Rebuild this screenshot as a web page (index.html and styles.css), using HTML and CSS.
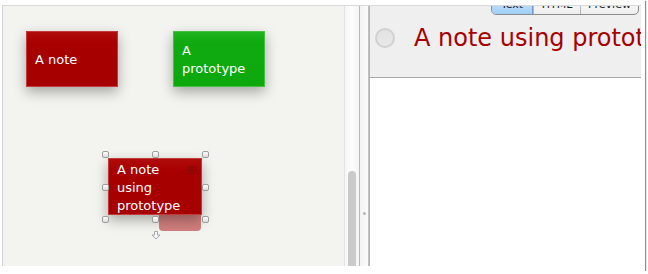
FILE: index.html
```html
<!DOCTYPE html>
<html>
<head>
<meta charset="utf-8">
<link rel="stylesheet" href="styles.css">
</head>
<body>
<div class="frame">
  <div class="window">
    <div class="canvas">
      <div class="note red n1"><div class="txt">A note</div></div>
      <div class="note green n2"><div class="txt">A prototype</div></div>
      <div class="attach"></div>
      <div class="note red n3">
        <div class="txt">A note using prototype</div>
        <svg class="plus" width="10" height="10" viewBox="0 0 10 10"><circle cx="5" cy="5" r="4" fill="none" stroke="#7c0a0a" stroke-width="1"/><path d="M5 2.5V7.5M2.5 5H7.5" stroke="#7c0a0a" stroke-width="1"/></svg>
      </div>
      <span class="handle h1"></span><span class="handle h2"></span><span class="handle h3"></span>
      <span class="handle h4"></span><span class="handle h5"></span>
      <span class="handle h6"></span><span class="handle h7"></span><span class="handle h8"></span>
      <svg class="arrow" width="10" height="9" viewBox="0 0 10 9"><path d="M3.5 0.5H6.5V4H9L5 8L1 4H3.5Z" fill="#f6f6f4" stroke="#a8a8a8" stroke-width="1"/></svg>
    </div>
    <div class="track"><div class="thumb"></div></div>
    <div class="divider"></div>
    <div class="splitter"><span class="dot"></span></div>
    <div class="divider2"></div>
    <div class="panel">
      <div class="header">
        <div class="tabs">
          <span class="tab sel t1">Text</span><span class="tab t2">HTML</span><span class="tab t3">Preview</span>
        </div>
        <div class="titlerow">
          <span class="radio"></span>
          <span class="title">A note using prototype</span>
        </div>
      </div>
      <div class="body"></div>
    </div>
  </div>
</div>
</body>
</html>
```
FILE: styles.css
```css
html, body {
  margin: 0;
  padding: 0;
  background: #ffffff;
}
body {
  font-family: "DejaVu Sans", "Liberation Sans", sans-serif;
}
.frame {
  width: 645px;
  height: 271px;
  background: #ffffff;
  box-shadow: 1px 1px 1px rgba(0, 0, 0, 0.45);
  overflow: hidden;
}
.window {
  margin: 5px 0 0 2px;
  width: 638px;
  height: 260px;
  border-top: 1px solid #d9d9d9;
  border-left: 1px solid #d2d2d2;
  display: flex;
  overflow: hidden;
}
.canvas {
  position: relative;
  width: 341px;
  flex: none;
  background: #f3f3ef;
  overflow: hidden;
}
.note {
  position: absolute;
  box-sizing: border-box;
  display: flex;
  flex-direction: column;
  justify-content: center;
  padding: 2px 8px 0 8px;
  overflow: hidden;
  color: #ffffff;
  font-size: 13px;
  line-height: 18px;
  box-shadow: 0 5px 12px rgba(0, 0, 0, 0.32);
}
.red {
  background: linear-gradient(#b00c0c, #a80000 20%, #a60000);
  border: 1px solid #c23a3a;
}
.green {
  background: linear-gradient(#1fb41f, #0faa0f 20%, #0ca80c);
  border: 1px solid #45c045;
}
.n1 {
  left: 23px;
  top: 25px;
  width: 92px;
  height: 56px;
}
.n2 {
  left: 170px;
  top: 25px;
  width: 92px;
  height: 56px;
}
.n3 {
  left: 105px;
  top: 152px;
  width: 94px;
  height: 57px;
  z-index: 2;
}
.plus {
  position: absolute;
  left: 78px;
  top: 6px;
}
.attach {
  position: absolute;
  left: 156px;
  top: 200px;
  width: 42px;
  height: 25px;
  background: rgba(170, 0, 0, 0.48);
  border-radius: 0 0 4px 4px;
  z-index: 1;
}
.handle {
  position: absolute;
  width: 5px;
  height: 5px;
  border: 1px solid #9c9c9c;
  border-radius: 2px;
  background: linear-gradient(#ffffff, #dcdcdc);
  z-index: 3;
}
.h1 { left: 99px; top: 145px; }
.h2 { left: 149px; top: 145px; }
.h3 { left: 199px; top: 145px; }
.h4 { left: 99px; top: 178px; }
.h5 { left: 199px; top: 178px; }
.h6 { left: 99px; top: 210px; }
.h7 { left: 149px; top: 210px; }
.h8 { left: 199px; top: 210px; }
.arrow {
  position: absolute;
  left: 148px;
  top: 225px;
}
.track {
  width: 14px;
  flex: none;
  border-left: 1px solid #e3e3e3;
  background: linear-gradient(90deg, #f6f6f6, #fdfdfd 50%, #f4f4f4);
  display: flex;
  flex-direction: column;
}
.thumb {
  margin: 165px 0 0 3px;
  width: 8px;
  flex: 1;
  background: #cacaca;
  border-radius: 4px 4px 0 0;
}
.divider {
  width: 1px;
  flex: none;
  background: #b9b9b9;
}
.splitter {
  width: 8px;
  flex: none;
  background: linear-gradient(90deg, #f2f2f2, #fbfbfb);
  display: flex;
  flex-direction: column;
  align-items: center;
  padding-top: 206px;
  box-sizing: border-box;
}
.dot {
  width: 3px;
  height: 3px;
  border-radius: 50%;
  background: #b4b4b4;
}
.divider2 {
  width: 2px;
  flex: none;
  background: linear-gradient(90deg, #c4c4c4, #b0b0b0);
}
.panel {
  width: 271px;
  flex: none;
  display: flex;
  flex-direction: column;
  background: #ffffff;
  overflow: hidden;
}
.header {
  height: 71px;
  flex: none;
  background: #efefef;
  border-bottom: 1px solid #a9a9a9;
  overflow: hidden;
  display: flex;
  flex-direction: column;
}
.tabs {
  align-self: flex-end;
  margin: -11px 2px 0 0;
  display: flex;
  height: 18px;
  border: 1px solid #8c8c8c;
  border-radius: 0 0 5px 5px;
  overflow: hidden;
  background: linear-gradient(#ffffff, #ededed);
}
.tab {
  font-size: 11px;
  line-height: 18px;
  color: #1a1a1a;
  text-align: center;
  border-left: 1px solid #b4b4b4;
}
.t1 {
  width: 41px;
  border-left: none;
}
.t2 {
  width: 46px;
}
.t3 {
  width: 57px;
}
.sel {
  background: linear-gradient(#d6ebfd, #9fcdf7);
  border-right: 1px solid #7a9cc4;
  width: 40px;
}
.titlerow {
  margin-top: 8px;
  height: 30px;
  display: flex;
  align-items: center;
  white-space: nowrap;
}
.radio {
  flex: none;
  width: 16px;
  height: 16px;
  margin-left: 5px;
  border-radius: 50%;
  border: 2px solid #d0d0d0;
  background: linear-gradient(#e2e2e2, #e9e9e9);
}
.title {
  margin-left: 19px;
  font-size: 24px;
  line-height: 30px;
  color: #a60000;
}
.body {
  flex: 1;
  background: #ffffff;
}
```
